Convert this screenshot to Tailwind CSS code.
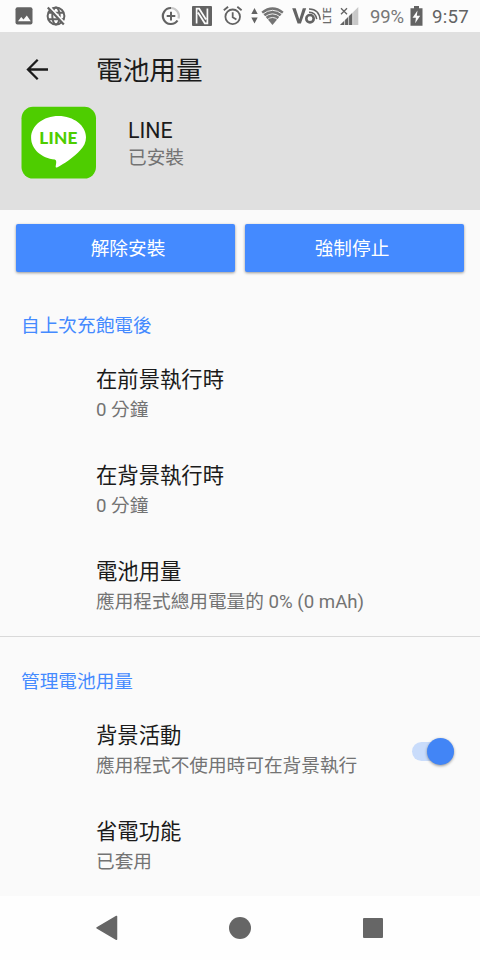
<!DOCTYPE html>
<html lang="zh-Hant">
<head>
<meta charset="utf-8">
<meta name="viewport" content="width=device-width, initial-scale=1">
<title>電池用量</title>
<script src="https://cdn.jsdelivr.net/npm/@tailwindcss/browser@4"></script>
</head>
<body class="bg-[#fafafa]">
<div class="flex h-[960px] w-[480px] flex-col overflow-hidden bg-[#fafafa] font-[Roboto,'Noto_Sans_CJK_TC',sans-serif] text-[#1b1b1b]">

  <!-- Status bar -->
  <div class="flex h-8 shrink-0 items-center bg-[#fcfcfc] text-[#636363]">
    <svg class="ml-[15px] h-8 w-[18px] shrink-0" viewBox="0 0 18 32"><rect x=".5" y="7.3" width="17" height="17.2" rx="2" fill="#636363"/><path d="M3 21.3l3.200-4.300 2.300 2.600 3.300-4.200 4 5.900z" fill="#fcfcfc"/></svg>
    <svg class="ml-[13px] h-8 w-5 shrink-0" viewBox="0 0 20 32" fill="none" stroke="#636363" stroke-width="2"><circle cx="10" cy="16" r="8.400"/><ellipse cx="10" cy="16" rx="3.700" ry="8.400"/><path d="M2.300 12.700h15.400M2.300 19.300h15.400"/><path d="M3.400 6.600l15 16.200" stroke="#fcfcfc" stroke-width="2"/><path d="M1.800 7.400l16 17.200" stroke-width="2.200"/></svg>
    <svg class="ml-[95px] h-8 w-5 shrink-0" viewBox="0 0 20 32" fill="none" stroke-width="2.200"><path d="M10 8a8 8 0 0 1 7.500 10.500" stroke="#c8c8c8"/><path d="M10 8a8 8 0 1 0 6.500 12.500" stroke="#636363"/><path d="M10 11.800v8.600M5.700 16.100h8.600" stroke="#636363" stroke-width="2"/></svg>
    <svg class="ml-[11px] h-8 w-5 shrink-0" viewBox="0 0 20 32"><rect y="6" width="20" height="20" rx="1" fill="#636363"/><path d="M4.600 23.500V8.700h2.600L14 19.500M15.400 8.500v14.800h-2.600L6 12.500" fill="none" stroke="#fcfcfc" stroke-width="1.700"/></svg>
    <svg class="ml-[11px] h-8 w-5 shrink-0" viewBox="0 0 20 32" fill="none" stroke="#636363" stroke-width="1.800"><circle cx="9.700" cy="16.800" r="7.300"/><path d="M9.700 12.200v5l3.700 2.300M.8 10.300l4.300-3.500M18.600 10.300l-4.300-3.500"/></svg>
    <svg class="ml-[8px] h-8 w-[7px] shrink-0" viewBox="0 0 7 32" fill="#636363"><path d="M3.500 8l3.200 6H.3zM3.500 23.500l3.200-6H.3z"/></svg>
    <svg class="ml-[3px] h-8 w-[23px] shrink-0" viewBox="0 0 23 32"><path d="M.4 11.700Q11.500 2.800 22.600 11.700L11.500 25z" fill="#747474"/><path d="M1.500 14.300Q11.500 6.300 21.500 14.300M3.500 17.100Q11.500 10.600 19.500 17.100M5.900 19.900Q11.500 15 17.100 19.900" fill="none" stroke="#fcfcfc" stroke-width=".9"/></svg>
    <svg class="ml-[8px] h-8 w-11 shrink-0 overflow-visible" viewBox="0 0 44 32"><path d="M.2 8.300h3.500l3.600 10.900 3.500-10.900h3.400L8.900 23.500H5.600z" fill="#636363"/><circle cx="18" cy="18.700" r="3.700" fill="none" stroke="#636363" stroke-width="2.600"/><path d="M17 12.300Q23.500 12 24.700 19.200M17 8.900Q27 8.700 28.200 19.800" fill="none" stroke="#636363" stroke-width="1.500"/><text transform="translate(38.700 24) rotate(-90)" font-family="Roboto,sans-serif" font-weight="500" font-size="10.500" textLength="16.500" lengthAdjust="spacingAndGlyphs" fill="#6c6c6c">LTE</text></svg>
    <svg class="ml-1 h-8 w-[19px] shrink-0" viewBox="0 0 19 32"><path d="M18.300 7v18H0z" fill="#c8c8c8"/><path d="M12.700 12.500V25H0z" fill="#636363"/><path d="M4.600 20v5M8.600 16v9M12.700 10v15" stroke="#fcfcfc" stroke-width=".7"/><path d="M1 8.300l6 6M7 8.300l-6 6" stroke="#636363" stroke-width="1.300"/></svg>
    <span class="ml-[11px] w-[36px] pt-px text-[18.500px] leading-8 tracking-[-.2px] text-[#777]">99%</span>
    <svg class="ml-[4px] h-8 w-[13px] shrink-0" viewBox="0 0 13 32"><path d="M4 6h5v2.200h3.500v17.500H.5V8.200H4z" fill="#636363"/><path d="M7.500 10.500l-5 7.300h3.400l-.7 5.500 5-7.500H6.800z" fill="#fcfcfc"/></svg>
    <span class="ml-[9px] pt-px text-[18.700px] leading-8 tracking-[.2px] text-[#636363]">9:57</span>
  </div>

  <!-- App bar and app identity -->
  <header class="h-[178px] shrink-0 bg-[#e0e0e0]">
    <div class="flex h-[74px] items-center">
      <svg class="ml-[26px] h-6 w-[23px] shrink-0" viewBox="0 0 23 24" fill="none" stroke="#1b1b1b" stroke-width="2.300"><path d="M22 12.500H2.500M11.700 2.800L2 12.500l9.700 9.700"/></svg>
      <h1 class="ml-[47px] pt-1 text-[26.670px] leading-10">電池用量</h1>
    </div>
    <div class="flex">
      <svg class="ml-[21px] h-[74px] w-[76px] shrink-0" viewBox="0 0 76 74"><rect x=".5" y=".8" width="74.500" height="71.700" rx="11.500" fill="#4ecd00"/><path d="M37.500 10C52.700 10 65 19.500 65 31.300c0 5-2 9-5.800 13C53.500 51 42 58.500 36.500 61.300c-1.300.6-2 .2-1.800-1.100.4-2.400 1.300-5.900-.9-6.600C20.500 52.200 10.100 43 10.100 31.700 10.100 19.500 22.300 10 37.500 10z" fill="#fff"/><text x="18.300" y="38.200" font-family="Lato,sans-serif" font-weight="900" font-size="17.300" textLength="38.200" lengthAdjust="spacing" fill="#4ecd00">LINE</text></svg>
      <div class="ml-[31px] pt-[11px]">
        <div class="text-[21.330px] leading-7">LINE</div>
        <div class="text-[18.670px] leading-[26px] text-[#737373]">已安裝</div>
      </div>
    </div>
  </header>

  <main class="flex h-[686px] shrink-0 flex-col">
    <div class="flex gap-[10px] px-4 pt-[14px] text-[18.670px] text-white">
      <button class="h-12 flex-1 rounded-[2px] bg-[#448aff] pt-[2px] pl-[5px] shadow-[0_1px_3px_rgba(0,0,0,0.4)]">解除安裝</button>
      <button class="h-12 flex-1 rounded-[2px] bg-[#448aff] pt-[2px] pr-[5px] shadow-[0_1px_3px_rgba(0,0,0,0.4)]">強制停止</button>
    </div>

    <section class="h-[365px] border-b border-[#d9d9d9] pt-[39px]">
      <h2 class="pl-[21px] text-[18.670px] leading-[30px] text-[#448aff]">自上次充飽電後</h2>
      <div class="mt-[6px] h-24 pt-[18px] pl-24">
        <div class="text-[21.330px] leading-[30px]">在前景執行時</div>
        <div class="text-[18.670px] leading-[30px] text-[#737373]">0 分鐘</div>
      </div>
      <div class="h-24 pt-[18px] pl-24">
        <div class="text-[21.330px] leading-[30px]">在背景執行時</div>
        <div class="text-[18.670px] leading-[30px] text-[#737373]">0 分鐘</div>
      </div>
      <div class="h-24 pt-[18px] pl-24">
        <div class="text-[21.330px] leading-[30px]">電池用量</div>
        <div class="text-[18.670px] leading-[30px] text-[#737373]">應用程式總用電量的 0% (0 mAh)</div>
      </div>
    </section>

    <section class="pt-[30px]">
      <h2 class="pl-[21px] text-[18.670px] leading-[30px] text-[#448aff]">管理電池用量</h2>
      <div class="mt-[6px] flex h-24 justify-between pr-[26px] pl-24">
        <div class="pt-[18px]">
          <div class="text-[21.330px] leading-[30px]">背景活動</div>
          <div class="text-[18.670px] leading-[30px] text-[#737373]">應用程式不使用時可在背景執行</div>
        </div>
        <div class="mt-[39px] flex h-[19px] w-[42px] items-center justify-end rounded-full bg-[#c9dcfb]">
          <div class="size-[27px] shrink-0 rounded-full bg-[#4285f6] shadow-[0_1px_3px_rgba(0,0,0,0.4)]"></div>
        </div>
      </div>
      <div class="h-24 pt-[18px] pl-24">
        <div class="text-[21.330px] leading-[30px]">省電功能</div>
        <div class="text-[18.670px] leading-[30px] text-[#737373]">已套用</div>
      </div>
    </section>
  </main>

  <!-- Navigation bar -->
  <nav class="flex h-16 shrink-0 items-center justify-between bg-[#fefefe] pr-[95px] pl-[95px]">
    <svg class="h-7 w-6" viewBox="0 0 24 28"><path d="M2 13.800L21.500 2.500v22.800z" fill="#666" stroke="#666" stroke-width="1.500" stroke-linejoin="round"/></svg>
    <div class="size-[22px] rounded-full bg-[#666]"></div>
    <div class="flex w-6 justify-center"><div class="size-5 rounded-[1px] bg-[#666]"></div></div>
  </nav>
</div>
</body>
</html>
